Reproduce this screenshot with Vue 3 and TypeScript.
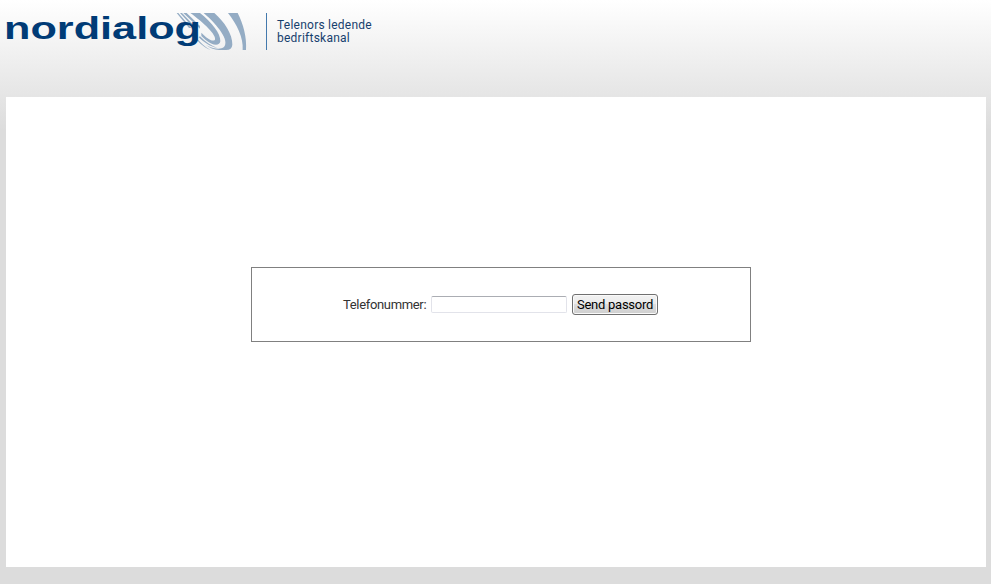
<script setup lang="ts">
import { ref } from 'vue'

const phone = ref('')
</script>

<template>
  <div class="page">
    <header class="header">
      <svg class="logo" width="242" height="50" viewBox="0 0 242 50" role="img" aria-label="nordialog">
        <g transform="translate(-6 0) scale(.333333)" fill="#94acc4">
          <path d="M684 39H713C730 72 741 112 738 150H728C731 112 710 72 684 39Z" />
          <path d="M611 39H643C673 65 698 103 697 134Q696 150 678 150H658Q634 148 617 134C636 145 660 151 672 141C689 122 655 77 611 39Z" />
          <path d="M571 39H600C635 67 662 100 661 124C659 139 638 138 617 120L604 108V98C620 115 638 127 645 119C650 105 611 68 571 39Z" />
          <path d="M550 39H560L600 78V86Z" />
          <path d="M540 39H546L590 85H582Z" />
          <path d="M530 39H535L574 84H567Z" />
          <path d="M600 109C617 126 634 138 652 144C629 140 611 126 596 112Z" />
          <path d="M590 113C603 130 616 142 632 150C611 143 597 128 586 115Z" />
        </g>
        <text class="wordmark" x="-2" y="38.5" textLength="197" lengthAdjust="spacingAndGlyphs">nordialog</text>
      </svg>
      <div class="tagline">Telenors ledende<br />bedriftskanal</div>
    </header>
    <main class="content">
      <form class="login" @submit.prevent>
        <label for="phone">Telefonummer:</label>
        <input id="phone" v-model="phone" type="text" />
        <button type="submit"><span>Send passord</span></button>
      </form>
    </main>
  </div>
</template>

<style>
body {
  background: #dcdcdc;
}
</style>

<style scoped>
.page {
  box-sizing: border-box;
  height: 584px;
  padding: 0 5px 17px 6px;
  background: linear-gradient(#fff 0, #dcdcdc 130px);
  font-family: Roboto, "Liberation Sans", sans-serif;
}
.header {
  display: flex;
  align-items: flex-start;
  height: 97px;
}
.logo {
  flex: none;
  overflow: visible;
}
.wordmark {
  fill: #003b76;
  font: bold 31px "Liberation Sans", Arial, sans-serif;
}
.tagline {
  box-sizing: border-box;
  height: 37px;
  margin: 13px 0 0 18px;
  padding: 6px 0 0 10px;
  border-left: 1px solid #4379ad;
  color: #173f6e;
  font-size: 12px;
  line-height: 13px;
  letter-spacing: 0.24px;
  white-space: nowrap;
}
.content {
  box-sizing: border-box;
  height: 470px;
  padding: 170px 0 0 245px;
  background: #fff;
}
.login {
  box-sizing: border-box;
  display: flex;
  align-items: center;
  width: 500px;
  height: 75px;
  padding-left: 91px;
  border: 1px solid #808080;
  font-size: 13px;
  color: #333;
}
label {
  width: 88px;
  letter-spacing: -0.34px;
  white-space: nowrap;
}
input {
  box-sizing: border-box;
  width: 136px;
  height: 17px;
  margin: 0 5px 0 0;
  padding: 1px 2px;
  border: 1px solid #e2e3ea;
  border-top-color: #abadb3;
  border-radius: 2px;
  background: #fff;
  font: inherit;
  outline: none;
}
button {
  box-sizing: border-box;
  display: flex;
  align-items: center;
  justify-content: center;
  width: 86px;
  height: 21px;
  padding: 0;
  border: 1px solid #707070;
  border-radius: 3px;
  background: linear-gradient(#f2f2f2 0, #ebebeb 48%, #dddddd 50%, #cfcfcf 100%);
  box-shadow: inset 0 0 0 1px #fafafa;
  color: #000;
  font: 13px Roboto, sans-serif;
  letter-spacing: -0.25px;
  white-space: nowrap;
}
</style>
